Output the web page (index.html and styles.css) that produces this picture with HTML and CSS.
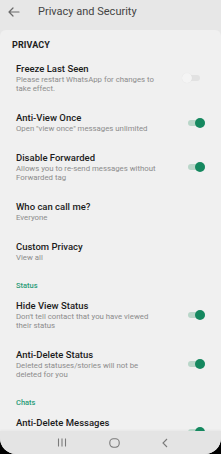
FILE: index.html
```html
<!DOCTYPE html>
<html>
<head>
<meta charset="utf-8">
<link rel="stylesheet" href="styles.css">
</head>
<body>
<div class="screen">
  <header class="appbar">
    <svg class="back" width="12" height="10" viewBox="0 0 12 10"><path d="M11 5H1.5M5 1L1 5l4 4" fill="none" stroke="#6a6a6a" stroke-width="1.2" stroke-linecap="round" stroke-linejoin="round"/></svg>
    <span class="title">Privacy and Security</span>
  </header>
  <main class="content">
    <div class="section-title">PRIVACY</div>
    <div class="item">
      <div class="text">
        <div class="label">Freeze Last Seen</div>
        <div class="sub">Please restart WhatsApp for changes to<br>take effect.</div>
      </div>
      <span class="toggle off"></span>
    </div>
    <div class="item">
      <div class="text">
        <div class="label">Anti-View Once</div>
        <div class="sub">Open "view once" messages unlimited</div>
      </div>
      <span class="toggle on"></span>
    </div>
    <div class="item">
      <div class="text">
        <div class="label">Disable Forwarded</div>
        <div class="sub">Allows you to re-send messages without<br>Forwarded tag</div>
      </div>
      <span class="toggle on"></span>
    </div>
    <div class="item">
      <div class="text">
        <div class="label">Who can call me?</div>
        <div class="sub">Everyone</div>
      </div>
    </div>
    <div class="item">
      <div class="text">
        <div class="label">Custom Privacy</div>
        <div class="sub">View all</div>
      </div>
    </div>
    <div class="group">Status</div>
    <div class="item">
      <div class="text">
        <div class="label">Hide View Status</div>
        <div class="sub">Don't tell contact that you have viewed<br>their status</div>
      </div>
      <span class="toggle on"></span>
    </div>
    <div class="item">
      <div class="text">
        <div class="label">Anti-Delete Status</div>
        <div class="sub">Deleted statuses/stories will not be<br>deleted for you</div>
      </div>
      <span class="toggle on"></span>
    </div>
    <div class="group">Chats</div>
    <div class="item">
      <div class="text tall">
        <div class="label">Anti-Delete Messages</div>
      </div>
      <span class="toggle on"></span>
    </div>
  </main>
  <nav class="navbar">
    <svg width="10" height="9" viewBox="0 0 10 9"><path d="M1.5 0.5v8M5 0.5v8M8.5 0.5v8" stroke="#7a7a7a" stroke-width="1.1"/></svg>
    <svg width="11" height="10" viewBox="0 0 11 10"><rect x="0.8" y="0.8" width="9.4" height="8.4" rx="3.6" fill="none" stroke="#7a7a7a" stroke-width="1.1"/></svg>
    <svg width="6" height="10" viewBox="0 0 6 10"><path d="M5 1L1 5l4 4" fill="none" stroke="#7a7a7a" stroke-width="1.1"/></svg>
  </nav>
</div>
</body>
</html>
```

FILE: styles.css
```css
html, body {
  margin: 0;
  padding: 0;
  background: #000;
}
body {
  width: 221px;
  height: 454px;
  overflow: hidden;
  font-family: Roboto, "Liberation Sans", sans-serif;
}
.screen {
  width: 221px;
  height: 454px;
  display: flex;
  flex-direction: column;
  background: #e7e7e7;
  border-radius: 0 0 16px 16px;
  overflow: hidden;
}
.appbar {
  height: 30px;
  flex: none;
  display: flex;
  align-items: center;
  background: #e7e7e7;
}
.back {
  margin-left: 8px;
  margin-right: 18px;
  margin-top: -7px;
}
.title {
  font-size: 11px;
  color: #444;
  margin-top: -8px;
}
.content {
  flex: 1;
  min-height: 0;
  overflow: hidden;
  background: #f0f0f0;
  border-radius: 6px 6px 0 0;
}
.section-title {
  padding: 10px 12px 4px;
  line-height: 10px;
  font-size: 9px;
  font-weight: 700;
  color: #1e1e1e;
  letter-spacing: 0.1px;
}
.group {
  padding: 9px 16px 0;
  line-height: 10px;
  font-size: 7.5px;
  font-weight: 500;
  color: #2a9c78;
}
.item {
  display: flex;
  align-items: center;
  padding: 9px 16px 10px;
}
.text {
  flex: 1;
  min-width: 0;
}
.text.tall {
  min-height: 30px;
}
.label {
  font-size: 9.5px;
  line-height: 12px;
  font-weight: 500;
  color: #1c1c1c;
  white-space: nowrap;
}
.sub {
  font-size: 7.8px;
  line-height: 9px;
  color: #8c8c8c;
  white-space: nowrap;
}
.toggle {
  flex: none;
  position: relative;
  width: 17px;
  height: 6px;
  border-radius: 3px;
}
.toggle::after {
  content: "";
  position: absolute;
  top: -2px;
  width: 10px;
  height: 10px;
  border-radius: 50%;
}
.toggle.on {
  background: #b9d6c9;
}
.toggle.on::after {
  right: 0;
  background: #15885f;
}
.toggle.off {
  background: #e2e2e2;
  margin-right: 5px;
}
.toggle.off::after {
  left: -1px;
  background: #f4f4f4;
  box-shadow: 0 0 1px rgba(0,0,0,0.08);
}
.navbar {
  height: 23px;
  flex: none;
  display: flex;
  align-items: center;
  justify-content: space-around;
  padding: 0 32px 0 36px;
  background: #e4e4e4;
  box-shadow: 0 -1px 2px rgba(0,0,0,0.04);
}
```
